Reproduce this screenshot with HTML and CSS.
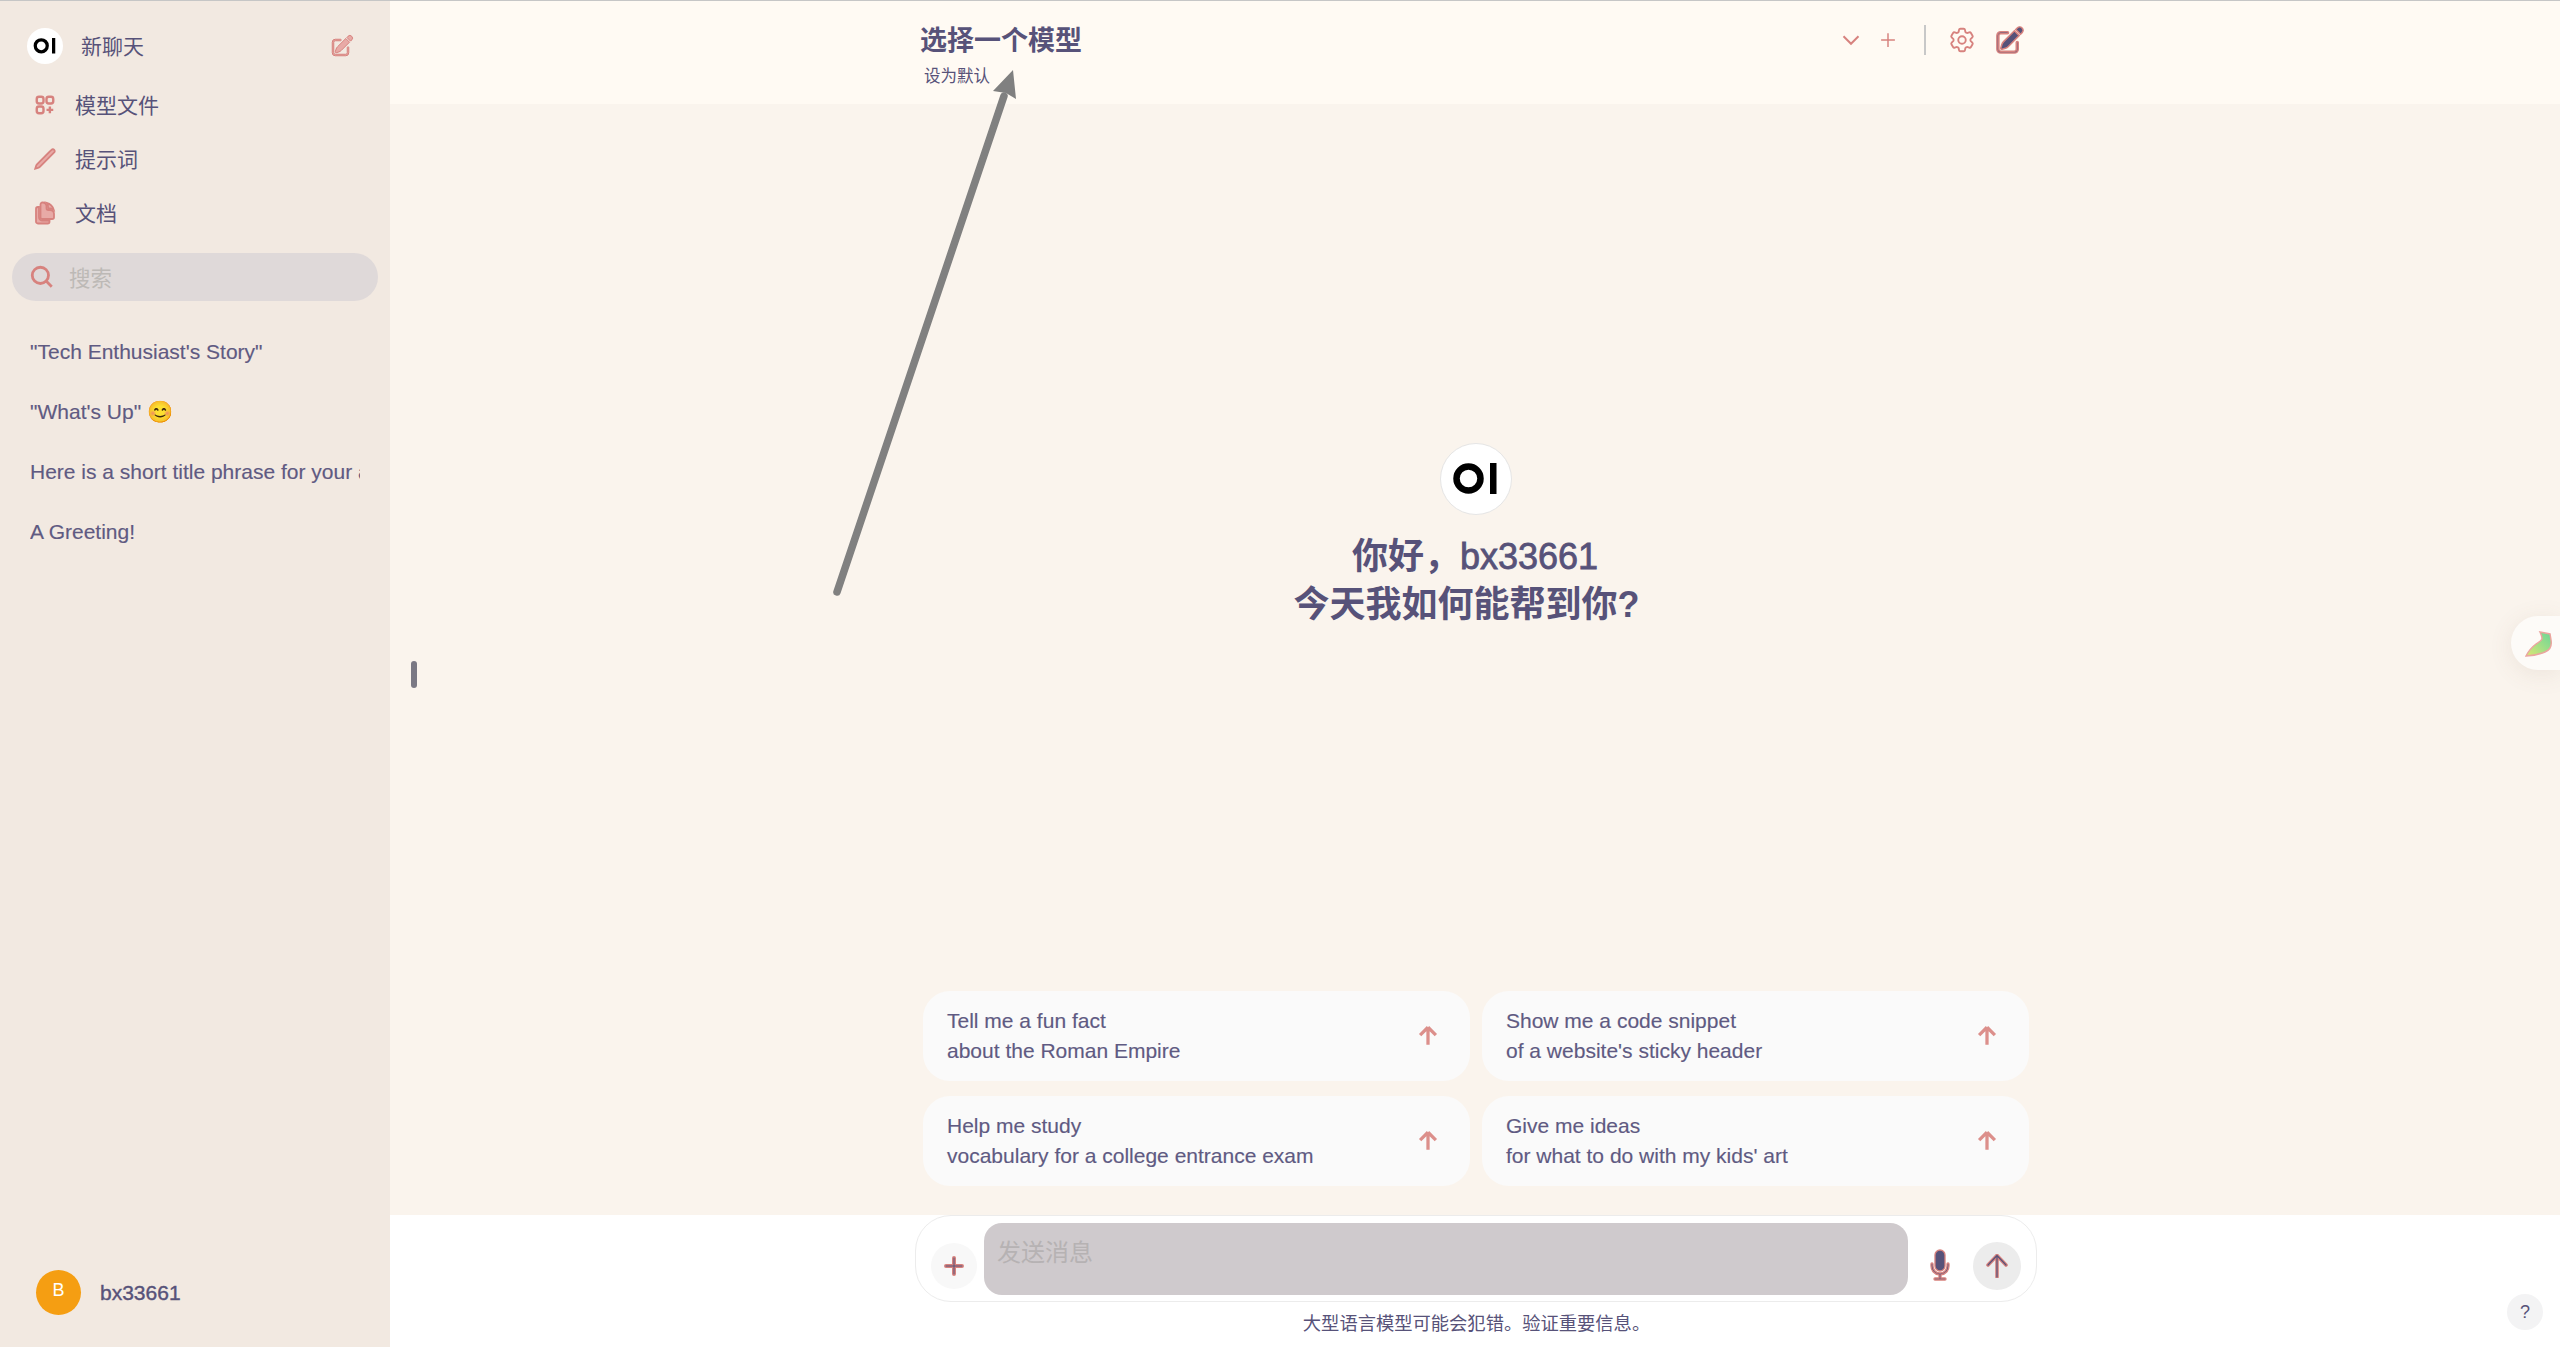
FILE: index.html
```html
<!DOCTYPE html>
<html lang="zh">
<head>
<meta charset="utf-8">
<title>Open WebUI</title>
<link rel="stylesheet" href="styles.css">
</head>
<body>
<div class="app">
  <aside class="sidebar">
    <div class="new-chat">
      <svg class="logo logo-small" viewBox="0 0 72 72"><circle class="logo-bg" cx="36" cy="36" r="36"/><circle class="logo-o" cx="28.5" cy="35.5" r="12"/><rect class="logo-i" x="50" y="20" width="6.5" height="31"/></svg>
      <span class="new-chat-label">新聊天</span>
      <svg class="icon-new" viewBox="0 0 24 24"><path d="M21.731 2.269a2.625 2.625 0 00-3.712 0l-1.157 1.157 3.712 3.712 1.157-1.157a2.625 2.625 0 000-3.712zM19.513 8.199l-3.712-3.712-8.4 8.4a5.25 5.25 0 00-1.32 2.214l-.8 2.685a.75.75 0 00.933.933l2.685-.8a5.25 5.25 0 002.214-1.32l8.4-8.4z"/><path d="M5.25 5.25a3 3 0 00-3 3v10.5a3 3 0 003 3h10.5a3 3 0 003-3V13.5a.75.75 0 00-1.5 0v5.25a1.5 1.5 0 01-1.5 1.5H5.25a1.5 1.5 0 01-1.5-1.5V8.25a1.5 1.5 0 011.5-1.5h5.25a.75.75 0 000-1.5H5.25z"/></svg>
    </div>
    <nav class="nav">
      <div class="nav-item">
        <svg class="nav-icon line" viewBox="0 0 24 24"><path d="M13.5 16.875h3.375m0 0h3.375m-3.375 0V13.5m0 3.375v3.375M6 10.5h2.25a2.25 2.25 0 0 0 2.25-2.25V6a2.25 2.25 0 0 0-2.25-2.25H6A2.25 2.25 0 0 0 3.75 6v2.25A2.25 2.25 0 0 0 6 10.5Zm0 9.75h2.25A2.25 2.25 0 0 0 10.5 18v-2.25a2.25 2.25 0 0 0-2.25-2.25H6a2.25 2.25 0 0 0-2.25 2.25V18A2.25 2.25 0 0 0 6 20.25Zm9.75-9.75H18a2.25 2.25 0 0 0 2.25-2.25V6A2.25 2.25 0 0 0 18 3.75h-2.25A2.25 2.25 0 0 0 13.5 6v2.25a2.25 2.25 0 0 0 2.25 2.25Z"/></svg>
        <span class="nav-label">模型文件</span>
      </div>
      <div class="nav-item">
        <svg class="nav-icon pink" viewBox="0 0 24 24"><path d="M16.862 4.487l1.687-1.688a1.875 1.875 0 112.652 2.652L6.832 19.82a4.5 4.5 0 01-1.897 1.13l-2.685.8.8-2.685a4.5 4.5 0 011.13-1.897L16.863 4.487z"/></svg>
        <span class="nav-label">提示词</span>
      </div>
      <div class="nav-item">
        <svg class="nav-icon pink" viewBox="0 0 24 24"><path d="M7.5 3.375c0-1.036.84-1.875 1.875-1.875h.375a3.75 3.75 0 013.75 3.75v1.875C13.5 8.161 14.34 9 15.375 9h1.875A3.75 3.75 0 0121 12.75v3.375C21 17.16 20.16 18 19.125 18h-9.75A1.875 1.875 0 017.5 16.125V3.375z"/><path d="M15 5.25a5.23 5.23 0 00-1.279-3.434 9.768 9.768 0 016.963 6.963A5.23 5.23 0 0017.25 7.5h-1.875A.375.375 0 0115 7.125V5.25zM4.875 6H6v10.125A3.375 3.375 0 009.375 19.5H16.5v1.125c0 1.035-.84 1.875-1.875 1.875h-9.75A1.875 1.875 0 013 20.625V7.875C3 6.839 3.84 6 4.875 6z"/></svg>
        <span class="nav-label">文档</span>
      </div>
    </nav>
    <div class="search">
      <svg class="search-icon" viewBox="0 0 24 24"><path d="M21 21l-5.197-5.197m0 0A7.5 7.5 0 105.196 5.196a7.5 7.5 0 0010.607 10.607z"/></svg>
      <span class="search-text">搜索</span>
    </div>
    <ul class="chats">
      <li class="chat">"Tech Enthusiast's Story"</li>
      <li class="chat">"What's Up" 😊</li>
      <li class="chat">Here is a short title phrase for your a</li>
      <li class="chat">A Greeting!</li>
    </ul>
    <div class="user">
      <div class="avatar">B</div>
      <span class="user-name">bx33661</span>
    </div>
  </aside>

  <main class="main">
    <header class="header">
      <div class="wrap header-row">
        <div class="model">
          <div class="model-title">选择一个模型</div>
          <div class="model-default">设为默认</div>
        </div>
        <div class="header-tools">
          <svg class="tool-chevron" viewBox="0 0 24 24"><path d="M19.5 8.25l-7.5 7.5-7.5-7.5"/></svg>
          <svg class="tool-plus" viewBox="0 0 24 24"><path d="M12 4.5v15m7.5-7.5h-15"/></svg>
          <span class="tool-divider"></span>
          <svg class="tool-gear" viewBox="0 0 24 24"><path d="M9.594 3.94c.09-.542.56-.94 1.11-.94h2.593c.55 0 1.02.398 1.11.94l.213 1.281c.063.374.313.686.645.87.074.04.147.083.22.127.324.196.72.257 1.075.124l1.217-.456a1.125 1.125 0 011.37.49l1.296 2.247a1.125 1.125 0 01-.26 1.431l-1.003.827c-.293.24-.438.613-.431.992a6.759 6.759 0 010 .255c-.007.378.138.75.43.99l1.005.828c.424.35.534.954.26 1.43l-1.298 2.247a1.125 1.125 0 01-1.369.491l-1.217-.456c-.355-.133-.75-.072-1.076.124a6.57 6.57 0 01-.22.128c-.331.183-.581.495-.644.869l-.213 1.28c-.09.543-.56.941-1.11.941h-2.594c-.55 0-1.02-.398-1.11-.94l-.213-1.281c-.062-.374-.312-.686-.644-.87a6.52 6.52 0 01-.22-.127c-.325-.196-.72-.257-1.076-.124l-1.217.456a1.125 1.125 0 01-1.369-.49l-1.297-2.247a1.125 1.125 0 01.26-1.431l1.004-.827c.292-.24.437-.613.43-.992a6.932 6.932 0 010-.255c.007-.378-.138-.75-.43-.99l-1.004-.828a1.125 1.125 0 01-.26-1.43l1.297-2.247a1.125 1.125 0 011.37-.491l1.216.456c.356.133.751.072 1.076-.124.072-.044.146-.087.22-.128.332-.183.582-.495.644-.869l.214-1.281z"/><path d="M15 12a3 3 0 11-6 0 3 3 0 016 0z"/></svg>
          <svg class="tool-edit" viewBox="0 0 24 24"><path d="M21.731 2.269a2.625 2.625 0 00-3.712 0l-1.157 1.157 3.712 3.712 1.157-1.157a2.625 2.625 0 000-3.712zM19.513 8.199l-3.712-3.712-8.4 8.4a5.25 5.25 0 00-1.32 2.214l-.8 2.685a.75.75 0 00.933.933l2.685-.8a5.25 5.25 0 002.214-1.32l8.4-8.4z"/><path d="M5.25 5.25a3 3 0 00-3 3v10.5a3 3 0 003 3h10.5a3 3 0 003-3V13.5a.75.75 0 00-1.5 0v5.25a1.5 1.5 0 01-1.5 1.5H5.25a1.5 1.5 0 01-1.5-1.5V8.25a1.5 1.5 0 011.5-1.5h5.25a.75.75 0 000-1.5H5.25z"/></svg>
        </div>
      </div>
    </header>

    <section class="content">
      <svg class="logo logo-large" viewBox="0 0 72 72"><circle class="logo-bg logo-bg-ring" cx="36" cy="36" r="35.5"/><circle class="logo-o" cx="28.5" cy="35.5" r="12"/><rect class="logo-i" x="50" y="20" width="6.5" height="31"/></svg>
      <h1 class="greeting">
        <span class="greeting-line">你好，<span class="greeting-name">bx33661</span></span>
        <span class="greeting-line greeting-shift">今天我如何能帮到你?</span>
      </h1>
      <div class="wrap cards">
        <div class="card">
          <div class="card-text"><div>Tell me a fun fact</div><div>about the Roman Empire</div></div>
          <svg class="card-arrow" viewBox="0 0 24 24"><path d="M12 19.5v-15m0 0l-6.75 6.75M12 4.5l6.75 6.75"/></svg>
        </div>
        <div class="card">
          <div class="card-text"><div>Show me a code snippet</div><div>of a website's sticky header</div></div>
          <svg class="card-arrow" viewBox="0 0 24 24"><path d="M12 19.5v-15m0 0l-6.75 6.75M12 4.5l6.75 6.75"/></svg>
        </div>
        <div class="card">
          <div class="card-text"><div>Help me study</div><div>vocabulary for a college entrance exam</div></div>
          <svg class="card-arrow" viewBox="0 0 24 24"><path d="M12 19.5v-15m0 0l-6.75 6.75M12 4.5l6.75 6.75"/></svg>
        </div>
        <div class="card">
          <div class="card-text"><div>Give me ideas</div><div>for what to do with my kids' art</div></div>
          <svg class="card-arrow" viewBox="0 0 24 24"><path d="M12 19.5v-15m0 0l-6.75 6.75M12 4.5l6.75 6.75"/></svg>
        </div>
      </div>
    </section>

    <footer class="footer">
      <div class="composer">
        <div class="attach">
          <svg class="attach-icon" viewBox="0 0 20 20"><path class="edge" d="M10 2v16M2 10h16"/><path class="core" d="M10 2v16M2 10h16"/></svg>
        </div>
        <div class="message">发送消息</div>
        <svg class="mic" viewBox="0 0 24 24"><path d="M8.25 4.5a3.75 3.75 0 117.5 0v8.25a3.75 3.75 0 11-7.5 0V4.5z"/><path d="M6 10.5a.75.75 0 01.75.75v1.5a5.25 5.25 0 1010.5 0v-1.5a.75.75 0 011.5 0v1.5a6.751 6.751 0 01-6 6.709v2.291h3a.75.75 0 010 1.5h-7.5a.75.75 0 010-1.5h3v-2.291a6.751 6.751 0 01-6-6.709v-1.5A.75.75 0 016 10.5z"/></svg>
        <div class="send">
          <svg class="send-icon" viewBox="0 0 24 24"><path class="edge" d="M12 23V1.500M12 1.500L3 11M12 1.500l9 9.500"/><path class="core" d="M12 23V1.500M12 1.500L3 11M12 1.500l9 9.500"/></svg>
        </div>
      </div>
      <p class="notice">大型语言模型可能会犯错。验证重要信息。</p>
    </footer>
  </main>
</div>

<span class="handle"></span>

<svg class="annotation" viewBox="0 0 200 540">
  <path class="annotation-line" d="M7 532L174 36"/>
  <path class="annotation-head" d="M183 10L163 31 176 33 186 39Z"/>
</svg>

<div class="widget">
  <svg class="widget-icon" viewBox="0 0 28 28">
    <defs><linearGradient id="leaf" x1="0" y1="1" x2="1" y2="0"><stop offset="0" stop-color="#dce775"/><stop offset="1" stop-color="#69d698"/></linearGradient></defs>
    <path d="M15 2l10 2 1 6c1 6-1 10-6 12-5 2-12 4-19 4 2-4 6-9 10-12 3-2 5-3 6-5 0-3-1-5-2-7z"/>
  </svg>
</div>

<div class="help">?</div>
</body>
</html>
```

FILE: styles.css
```css
* { box-sizing: border-box; }

html, body { height: 100%; }

body {
  margin: 0;
  overflow: hidden;
  position: relative;
  font-family: "Liberation Sans", "Noto Sans CJK SC", sans-serif;
  font-size: 21px;
  color: #575279;
  background: #faf4ed;
}

.app {
  display: flex;
  height: 100%;
  border-top: 1px solid #c6c6c6;
}

/* Sidebar */
.sidebar {
  width: 390px;
  flex: none;
  display: flex;
  flex-direction: column;
  padding-top: 27px;
  background: #f2e9e1;
}

.logo { display: block; flex: none; }
.logo-bg { fill: #fff; }
.logo-bg-ring { stroke: #e5e5e5; stroke-width: 1; }
.logo-o { fill: none; stroke: #000; stroke-width: 6.5; }
.logo-i { fill: #000; }
.logo-small { width: 36px; height: 36px; }
.logo-large { width: 72px; height: 72px; margin-left: 1px; }

.new-chat {
  display: flex;
  align-items: center;
  height: 36px;
  padding: 0 36px 0 27px;
}
.new-chat-label { margin: 0 0 2px 18px; }
.icon-new {
  width: 24px;
  height: 24px;
  margin-left: auto;
  fill: #e8aaa6;
  stroke: #d7827e;
  stroke-width: 1;
}

.nav { margin-top: 14px; }
.nav-item {
  display: flex;
  align-items: center;
  height: 54px;
  padding-left: 33px;
}
.nav-label { margin-bottom: 3px; }
.nav-icon {
  width: 24px;
  height: 24px;
  margin-right: 18px;
  flex: none;
}
.nav-icon.line { fill: none; stroke: #d7827e; stroke-width: 2.4; }
.nav-icon.pink { fill: #e8aaa6; stroke: #d7827e; stroke-width: 1.8; }

.search {
  display: flex;
  align-items: center;
  height: 48px;
  margin: 13px 12px 0;
  padding-left: 17px;
  border-radius: 24px;
  background: #dfd9d9;
}
.search-icon {
  width: 26px;
  height: 26px;
  fill: none;
  stroke: #d7827e;
  stroke-width: 2.6;
}
.search-text { margin: 0 0 2px 14px; color: #bdb9b6; font-size: 21.5px; }

.chats {
  list-style: none;
  margin: 21px 0 0;
  padding: 0 30px;
}
.chat {
  height: 60px;
  line-height: 60px;
  white-space: nowrap;
  overflow: hidden;
  color: #5f5a82;
  -webkit-text-stroke: .15px #5f5a82;
}

.user {
  display: flex;
  align-items: center;
  margin-top: auto;
  padding: 0 0 32px 36px;
}
.avatar {
  width: 45px;
  height: 45px;
  border-radius: 50%;
  background: #f59e12;
  color: #fff;
  font-size: 18px;
  line-height: 41px;
  text-align: center;
}
.user-name { margin-left: 19px; -webkit-text-stroke: .4px #575279; }

/* Main */
.main {
  flex: 1;
  min-width: 0;
  display: flex;
  flex-direction: column;
}
.wrap { width: 1122px; margin-left: auto; margin-right: auto; }

.header {
  height: 103px;
  flex: none;
  background: #fffaf3;
}
.header-row {
  display: flex;
  justify-content: space-between;
  align-items: flex-start;
  padding: 22px 11px 0 6px;
}
.model-title {
  font-size: 27px;
  font-weight: 700;
  line-height: 36px;
}
.model-default {
  margin: 6px 0 0 4px;
  font-size: 16.5px;
  line-height: 22px;
}
.header-tools {
  display: flex;
  align-items: center;
  height: 36px;
  margin-top: -1px;
}
.tool-chevron { width: 24px; height: 24px; fill: none; stroke: #d7827e; stroke-width: 2; }
.tool-plus { width: 22px; height: 22px; margin-left: 14px; fill: none; stroke: #d7827e; stroke-width: 1.6; }
.tool-divider { width: 2px; height: 30px; margin-left: 25px; background: #c8c8c8; }
.tool-gear { width: 30px; height: 30px; margin-left: 21px; fill: none; stroke: #d7827e; stroke-width: 1.5; }
.tool-edit { width: 31px; height: 31px; margin-left: 17px; fill: #575279; stroke: #d7827e; stroke-width: 1.2; }

.content {
  flex: 1;
  min-height: 0;
  display: flex;
  flex-direction: column;
  align-items: center;
  padding: 339px 0 29px;
}
.greeting {
  margin: 18px 0 0;
  font-size: 36px;
  font-weight: 700;
  line-height: 48px;
  text-align: center;
}
.greeting-line { display: block; }
.greeting-name { font-weight: 400; -webkit-text-stroke: .8px #575279; }
.greeting-shift { padding-right: 17px; }

.cards {
  display: grid;
  grid-template-columns: 547px 547px;
  column-gap: 12px;
  row-gap: 15px;
  margin-top: auto;
  padding-left: 9px;
}
.card {
  display: flex;
  align-items: center;
  justify-content: space-between;
  height: 90px;
  padding: 0 28px 0 24px;
  border-radius: 27px;
  background: #fafafa;
  line-height: 30px;
  color: #5f5a82;
  -webkit-text-stroke: .15px #5f5a82;
}
.card-arrow { width: 28px; height: 28px; fill: none; stroke: #dc8f8b; stroke-width: 2.8; }

.footer {
  height: 132px;
  flex: none;
  background: #fff;
}
.composer {
  display: flex;
  align-items: flex-start;
  width: 1122px;
  height: 87px;
  margin-left: 525px;
  padding: 7px 0 0 15px;
  border: 1px solid #ececec;
  border-radius: 36px;
}
.attach {
  display: flex;
  align-items: center;
  justify-content: center;
  width: 46px;
  height: 46px;
  margin-top: 20px;
  border-radius: 50%;
  background: #f8f8f8;
  flex: none;
}
.attach-icon { width: 20px; height: 20px; fill: none; stroke-linecap: round; }
.edge { stroke: #d7827e; stroke-width: 4; }
.core { stroke: #575279; stroke-width: 1; }
.message {
  width: 924px;
  height: 72px;
  margin-left: 7px;
  padding: 15px 0 0 13px;
  border-radius: 18px;
  background: #cfcacd;
  color: #b6b2b3;
  font-size: 24px;
  line-height: 30px;
  flex: none;
}
.mic {
  width: 38px;
  height: 32px;
  margin: 26px 0 0 13px;
  fill: #575279;
  stroke: #d7827e;
  stroke-width: 1;
  flex: none;
}
.send {
  display: flex;
  align-items: center;
  justify-content: center;
  width: 48px;
  height: 48px;
  margin: 19px 0 0 14px;
  border-radius: 50%;
  background: #ececec;
  flex: none;
}
.send-icon { width: 24px; height: 24px; fill: none; stroke-linecap: round; stroke-linejoin: round; }
.send-icon .edge { stroke-width: 3.6; }
.send-icon .core { stroke-width: 1.2; }
.notice {
  margin: 10px 0 0;
  padding-left: 3px;
  font-size: 18.3px;
  line-height: 24px;
  text-align: center;
}

/* Overlays */
.handle {
  position: absolute;
  left: 411px;
  top: 661px;
  width: 6px;
  height: 27px;
  border-radius: 3px;
  background: #7a7884;
}
.annotation {
  position: absolute;
  left: 830px;
  top: 60px;
  width: 200px;
  height: 540px;
}
.annotation-line { fill: none; stroke: #808080; stroke-width: 7.5; stroke-linecap: round; }
.annotation-head { fill: #808080; }

.widget {
  position: absolute;
  right: 0;
  top: 616px;
  width: 49px;
  height: 54px;
  padding: 14px 0 0 14px;
  border-radius: 27px 0 0 27px;
  background: #fdfbf8;
  box-shadow: 0 4px 24px rgba(120, 90, 70, .1);
}
.widget-icon { display: block; width: 28px; height: 28px; fill: url(#leaf); stroke: #eba59f; stroke-width: 1.500; }

.help {
  position: absolute;
  right: 17px;
  bottom: 17px;
  width: 36px;
  height: 36px;
  border-radius: 50%;
  background: #f3f3f4;
  font-size: 18px;
  line-height: 36px;
  text-align: center;
}
```
